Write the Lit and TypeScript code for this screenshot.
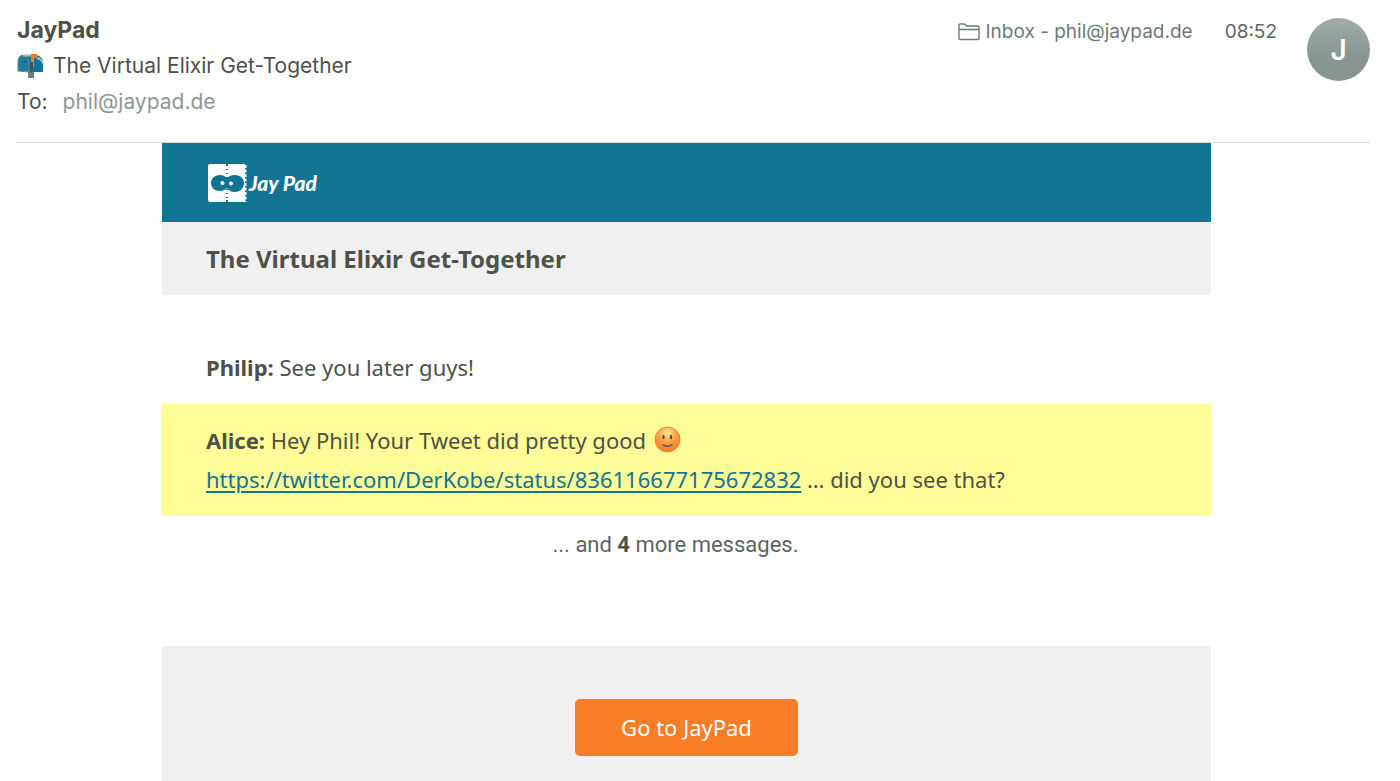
import { LitElement, html, css } from "lit";
import { customElement } from "lit/decorators.js";

@customElement("mail-header")
class MailHeader extends LitElement {
  static styles = css`
    :host {
      display: block;
      font-family: Inter, "Liberation Sans", sans-serif;
      color: #4d5148;
    }
    .header {
      display: flex;
      justify-content: space-between;
      margin: 0 30px 0 17px;
      padding: 12px 0 22px;
      border-bottom: 1px solid #dcdedd;
    }
    .sender {
      margin: 0;
      font-size: 23px;
      font-weight: 700;
      line-height: 36px;
    }
    .row {
      display: flex;
      align-items: center;
      gap: 9px;
      margin: 0;
      font-size: 21px;
      font-weight: 400;
      line-height: 36px;
    }
    .row.to {
      gap: 15px;
    }
    .address {
      color: #8b9896;
      text-decoration: none;
    }
    .meta {
      display: flex;
      align-items: flex-start;
      font-size: 19px;
      line-height: 40px;
      color: #6d7a77;
    }
    .mailbox {
      display: flex;
      align-items: center;
      gap: 6px;
    }
    .time {
      margin: 0 30px 0 32px;
      color: #5c6864;
    }
    .avatar {
      width: 63px;
      height: 63px;
      margin-top: 6px;
      border-radius: 50%;
      background: linear-gradient(#a0acaa, #879492 65%);
      color: #fff;
      font-size: 28px;
      font-weight: 600;
      line-height: 64px;
      text-align: center;
    }
    svg {
      display: block;
      flex: none;
    }
  `;

  render() {
    return html`
      <header class="header">
        <div>
          <h1 class="sender">JayPad</h1>
          <h2 class="row">
            <svg width="27" height="26" viewBox="0 0 27 26" aria-hidden="true">
              <rect x="11" y="18" width="6" height="7" fill="#6f7b79" />
              <path d="M1 18V8c0-4 2-6 5-6h11c6 0 9 3 9 8v9H12v-1z" fill="#127493" />
              <path d="M1 18V8a5 5 0 0 1 11 0v11z" fill="#1b7f9f" stroke="#6f8b93" />
              <path d="M6 2.500h8M20 5q5 1 6 6" fill="none" stroke="#a9b7b8" stroke-width="2" />
              <path d="M5 9h4" stroke="#0b5670" />
              <path d="M14 1h6v4h-3v9h-3z" fill="#f97c26" />
              <path d="M13 9h3v7h-3z" fill="#4d5148" />
            </svg>
            <span>The Virtual Elixir Get-Together</span>
          </h2>
          <p class="row to">
            <span>To:</span><a class="address" href="mailto:phil@jaypad.de">phil@jaypad.de</a>
          </p>
        </div>
        <div class="meta">
          <span class="mailbox">
            <svg width="22" height="18" viewBox="0 0 22 18" fill="none" stroke="#6d7a77" aria-hidden="true">
              <path stroke-width="1.400" d="M1 15.500V2a1 1 0 0 1 1-1h4.500l2 2H20a1 1 0 0 1 1 1v11.500a1 1 0 0 1-1 1H2a1 1 0 0 1-1-1zM1 6.500h20" />
            </svg>
            <span>Inbox - phil@jaypad.de</span>
          </span>
          <time class="time" datetime="08:52">08:52</time>
          <div class="avatar">J</div>
        </div>
      </header>
    `;
  }
}

@customElement("jaypad-logo")
class JaypadLogo extends LitElement {
  static styles = css`
    :host {
      display: flex;
      align-items: center;
      gap: 2px;
      color: #fff;
    }
    .word {
      font: italic 900 21px/39px Lato, sans-serif;
    }
    svg {
      display: block;
    }
  `;

  render() {
    return html`
      <svg width="39" height="38" viewBox="0 0 39 38" aria-hidden="true">
        <path d="M2 0H18V38H2a2 2 0 0 1-2-2V2a2 2 0 0 1 2-2z" fill="#fff" />
        <path d="M20 0H37V38H20z" fill="#fff" />
        <path d="M19 2V36" stroke="#fff" stroke-width="2" stroke-dasharray="3 1" />
        <path d="M37 1V38" fill="none" stroke="#fff" stroke-width="3" stroke-dasharray="3 1.500" />
        <path
          d="M3 19c0-5 4-8 9-8 3 0 5 1 7 3 2-2 4-3 8-3 5 0 9 3 9 8s-4 9-9 9c-4 0-7-2-8-4-2 2-4 3-7 3-5 0-9-3-9-8z"
          fill="#127493"
        />
        <circle cx="14.500" cy="19" r="2" fill="#fff" />
        <circle cx="23" cy="19.500" r="2" fill="#fff" />
      </svg>
      <span class="word">Jay Pad</span>
    `;
  }
}

@customElement("mail-body")
class MailBody extends LitElement {
  static styles = css`
    :host {
      display: flex;
      flex-direction: column;
      flex: 1;
      box-sizing: border-box;
      padding: 0 27px 0 0;
      font-family: "Noto Sans", "Open Sans", sans-serif;
      font-size: 22px;
      line-height: 39px;
      color: #4d5148;
    }
    .letter {
      display: flex;
      flex-direction: column;
      flex: 1;
      width: calc(100% - 32px);
      max-width: 1049px;
      margin: 0 auto;
    }
    .brand {
      padding: 20px 46px;
      background: #127493;
    }
    .title {
      margin: 0;
      padding: 17px 44px;
      background: #f0f0f0;
      font-size: 24px;
      font-weight: 700;
    }
    .messages {
      padding: 36px 0 82px;
    }
    .message {
      margin: 0;
      padding: 17px 44px;
      overflow-wrap: anywhere;
    }
    .highlight {
      background: #fefd98;
    }
    .link {
      color: #127493;
      text-decoration-thickness: 2px;
      text-underline-offset: 3px;
    }
    .emoji {
      margin-left: 2px;
      vertical-align: -4px;
    }
    .more {
      margin: 0;
      padding: 9px 22px 0 0;
      font-family: Roboto, sans-serif;
      text-align: center;
      color: #5c6660;
    }
    .more strong {
      color: #4d5148;
    }
    .footer {
      flex: 1;
      padding: 53px 16px 24px;
      background: #f0f0f0;
      text-align: center;
    }
    .button {
      display: inline-block;
      padding: 9px 46px;
      border-radius: 5px;
      background: #f97c26;
      color: #fff;
      text-decoration: none;
    }
  `;

  render() {
    return html`
      <article class="letter">
        <div class="brand"><jaypad-logo></jaypad-logo></div>
        <h2 class="title">The Virtual Elixir Get-Together</h2>
        <div class="messages">
          <p class="message"><strong>Philip:</strong> See you later guys!</p>
          <p class="message highlight">
            <strong>Alice:</strong> Hey Phil! Your Tweet did pretty good
            <svg class="emoji" width="27" height="27" viewBox="0 0 27 27" role="img" aria-label="Smile">
              <defs>
                <radialGradient id="face" cx=".5" cy=".25" r=".7">
                  <stop offset="0" stop-color="#fdf08c" />
                  <stop offset=".5" stop-color="#fba04a" />
                  <stop offset="1" stop-color="#f97c26" />
                </radialGradient>
              </defs>
              <circle cx="13.500" cy="13.500" r="12.500" fill="url(#face)" stroke="#f97c26" />
              <ellipse cx="9.500" cy="11" rx="1.200" ry="2.200" fill="#4d5148" />
              <ellipse cx="17" cy="11" rx="1.200" ry="2.200" fill="#4d5148" />
              <path d="M8.500 18.500q5 3.500 10 0" fill="none" stroke="#4d5148" stroke-width="1.300" />
            </svg>
            <br />
            <a class="link" href="https://twitter.com/DerKobe/status/836116677175672832">https://twitter.com/DerKobe/status/836116677175672832</a>
            … did you see that?
          </p>
          <p class="more">... and <strong>4</strong> more messages.</p>
        </div>
        <footer class="footer"><a class="button" href="#">Go to JayPad</a></footer>
      </article>
    `;
  }
}

@customElement("app-root")
class AppRoot extends LitElement {
  static styles = css`
    :host {
      display: flex;
      flex-direction: column;
      min-height: 100vh;
      background: #fff;
    }
  `;

  render() {
    return html`<mail-header></mail-header><mail-body></mail-body>`;
  }
}
